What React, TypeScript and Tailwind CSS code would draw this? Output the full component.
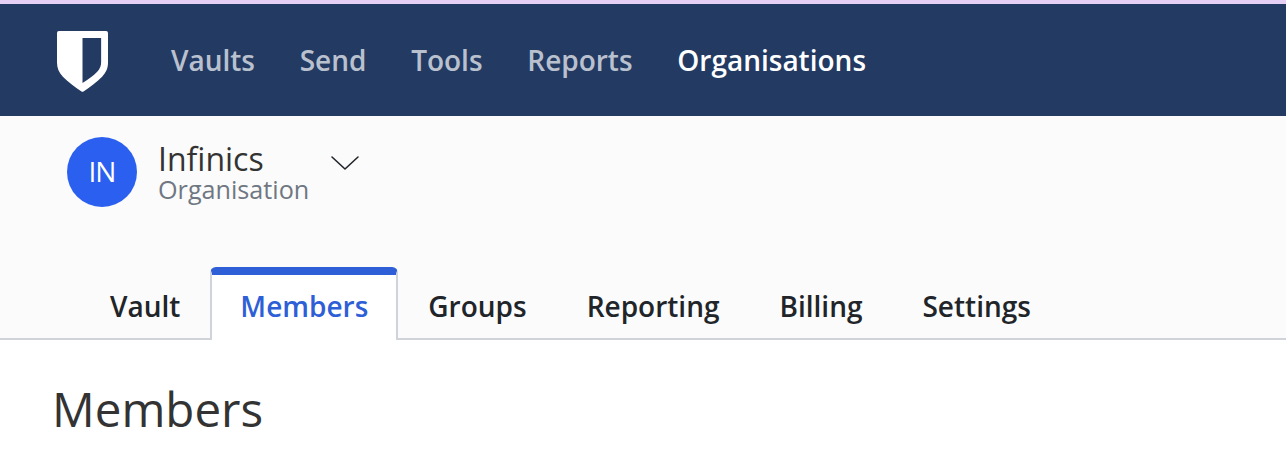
const navItems = ["Vaults", "Send", "Tools", "Reports"];
const tabs = ["Groups", "Reporting", "Billing", "Settings"];

function Shield() {
  return (
    <svg width="51" height="61" viewBox="0 0 52 62" className="mt-[2px] block">
      <path
        fill="#fff"
        fillRule="evenodd"
        d="M2 0h48a2 2 0 0 1 2 2v30c0 6-2 10-6 14.500-5 5-12 10.500-19 15a2 2 0 0 1-2 0c-7-4.500-14-10-19-15C2 42 0 38 0 32V2a2 2 0 0 1 2-2zM26 7v46c6-3.500 11-7.500 15-11.500 3-3.500 4-6 4-10V7z"
      />
    </svg>
  );
}

function Chevron() {
  return (
    <svg width="30" height="16" viewBox="0 0 30 16" fill="none" className="ml-[21px] mt-[18px] block">
      <path d="M2 2l13 12L28 2" stroke="#212529" strokeWidth="1.6" strokeLinecap="round" strokeLinejoin="round" />
    </svg>
  );
}

export default function App() {
  return (
    <div className="h-[468px] w-[1286px] overflow-hidden bg-white font-['Open_Sans',sans-serif]">
      <div className="h-1 bg-[#e6cff5]" />
      <nav className="flex h-[112px] items-center bg-[#233a63] pl-[57px]">
        <Shield />
        <div className="ml-[63px] flex gap-[44.7px] text-[28px] font-semibold">
          {navItems.map((item) => (
            <span key={item} className="text-white/70">
              {item}
            </span>
          ))}
          <span className="text-white">Organisations</span>
        </div>
      </nav>
      <header className="h-[224px] border-b-2 border-[#d0d3da] bg-[#fbfbfb]">
        <div className="flex pl-[67px] pt-[21px]">
          <div className="flex h-[70px] w-[70px] items-center justify-center rounded-full bg-[#2b5ff0] pb-[2px] text-[28px] font-normal tracking-[-1px] text-white">
            IN
          </div>
          <div className="ml-[21px] pt-[5px]">
            <div className="text-[32px] leading-[34px] text-[#333]">Infinics</div>
            <div className="text-[25.2px] leading-[26px] text-[#6f7782]">Organisation</div>
          </div>
          <Chevron />
        </div>
        <div className="mt-[60px] flex pl-[79px] text-[28px] font-semibold text-[#212529]">
          <span className="pl-[31px] pr-[30px] pt-[17px] leading-[44px]">Vault</span>
          <span className="box-content h-[56px] rounded-t-md border-x-2 border-t-8 border-x-[#d0d3da] border-t-[#2f5fd6] bg-white px-[28px] pt-[9px] leading-[44px] text-[#2f5fd6]">
            Members
          </span>
          {tabs.map((tab) => (
            <span key={tab} className="px-[30px] pt-[17px] leading-[44px]">
              {tab}
            </span>
          ))}
        </div>
      </header>
      <h1 className="pl-[52px] pt-[33px] text-[47.5px] leading-[72px] text-[#333]">Members</h1>
    </div>
  );
}
